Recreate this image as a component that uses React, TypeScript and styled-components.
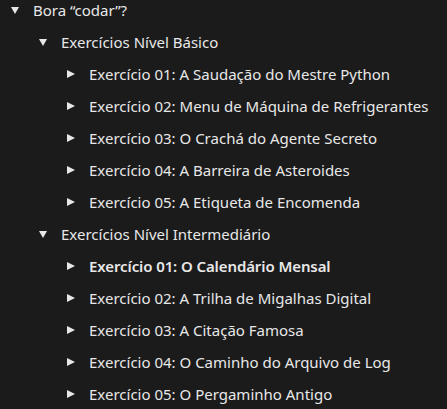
import React from "react";
import styled, { createGlobalStyle } from "styled-components";

const Global = createGlobalStyle`
  html, body { margin: 0; padding: 0; background: #1b1b1b; }
  body { font-family: "Noto Sans", "Open Sans", sans-serif; }
`;

const Page = styled.div`
  background: #1b1b1b;
  min-height: 409px;
  width: 447px;
  overflow: hidden;
`;

const List = styled.ul`
  list-style: none;
  margin: 0;
  padding: 0;
  display: flex;
  flex-direction: column;
  gap: 12px;
`;

const Row = styled.li<{ $level: number }>`
  display: flex;
  align-items: center;
  height: 20px;
  padding-left: ${(p) => 11 + p.$level * 28}px;
  color: #e8e8e8;
  font-size: 15px;
  white-space: nowrap;
`;

const Label = styled.span<{ $bold?: boolean }>`
  font-weight: ${(p) => (p.$bold ? 600 : 400)};
  letter-spacing: ${(p) => (p.$bold ? "-0.1px" : "0")};
`;

const Caret = styled.span<{ $open: boolean }>`
  width: 22px;
  flex: none;
  display: flex;
  align-items: center;
  &::before {
    content: "";
    display: block;
    width: 0;
    height: 0;
    ${(p) =>
      p.$open
        ? `border-left: 4px solid transparent; border-right: 4px solid transparent; border-top: 7px solid #e8e8e8;`
        : `border-top: 4.5px solid transparent; border-bottom: 4.5px solid transparent; border-left: 8px solid #e8e8e8;`}
  }
`;

type Item = { label: string; level: number; open: boolean; bold?: boolean };

const items: Item[] = [
  { label: "Bora “codar”?", level: 0, open: true },
  { label: "Exercícios Nível Básico", level: 1, open: true },
  { label: "Exercício 01: A Saudação do Mestre Python", level: 2, open: false },
  { label: "Exercício 02: Menu de Máquina de Refrigerantes", level: 2, open: false },
  { label: "Exercício 03: O Crachá do Agente Secreto", level: 2, open: false },
  { label: "Exercício 04: A Barreira de Asteroides", level: 2, open: false },
  { label: "Exercício 05: A Etiqueta de Encomenda", level: 2, open: false },
  { label: "Exercícios Nível Intermediário", level: 1, open: true },
  { label: "Exercício 01: O Calendário Mensal", level: 2, open: false, bold: true },
  { label: "Exercício 02: A Trilha de Migalhas Digital", level: 2, open: false },
  { label: "Exercício 03: A Citação Famosa", level: 2, open: false },
  { label: "Exercício 04: O Caminho do Arquivo de Log", level: 2, open: false },
  { label: "Exercício 05: O Pergaminho Antigo", level: 2, open: false },
];

export default function App() {
  return (
    <Page>
      <Global />
      <List>
        {items.map((it, i) => (
          <Row key={i} $level={it.level}>
            <Caret $open={it.open} />
            <Label $bold={it.bold}>{it.label}</Label>
          </Row>
        ))}
      </List>
    </Page>
  );
}
